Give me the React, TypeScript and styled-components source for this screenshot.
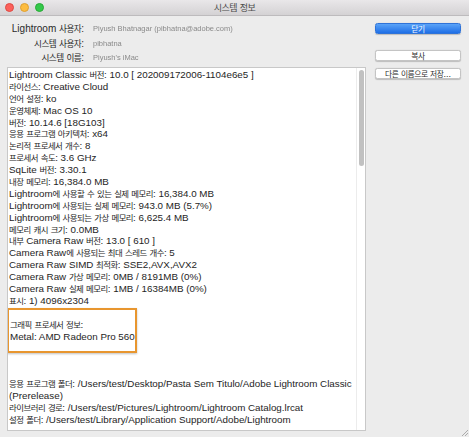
import React, { FC, ReactNode } from "react"
import styled, { createGlobalStyle } from "styled-components"

const GlobalStyle = createGlobalStyle`
	html, body {
		margin: 0;
		padding: 0;
		background: #ececec;
	}
	* {
		box-sizing: border-box;
	}
`

const FONT = `"Liberation Sans", "Noto Sans CJK KR", sans-serif`

const userRows = [
	{ label: "Lightroom 사용자:", value: "Piyush Bhatnagar (pibhatna@adobe.com)" },
	{ label: "시스템 사용자:", value: "pibhatna" },
	{ label: "시스템 이름:", value: "Piyush's iMac" },
]

const infoLines = [
	"Lightroom Classic 버전: 10.0 [ 202009172006-1104e6e5 ]",
	"라이선스: Creative Cloud",
	"언어 설정: ko",
	"운영체제: Mac OS 10",
	"버전: 10.14.6 [18G103]",
	"응용 프로그램 아키텍처: x64",
	"논리적 프로세서 개수: 8",
	"프로세서 속도: 3.6 GHz",
	"SqLite 버전: 3.30.1",
	"내장 메모리: 16,384.0 MB",
	"Lightroom에 사용할 수 있는 실제 메모리: 16,384.0 MB",
	"Lightroom에 사용되는 실제 메모리: 943.0 MB (5.7%)",
	"Lightroom에 사용되는 가상 메모리: 6,625.4 MB",
	"메모리 캐시 크기: 0.0MB",
	"내부 Camera Raw 버전: 13.0 [ 610 ]",
	"Camera Raw에 사용되는 최대 스레드 개수: 5",
	"Camera Raw SIMD 최적화: SSE2,AVX,AVX2",
	"Camera Raw 가상 메모리: 0MB / 8191MB (0%)",
	"Camera Raw 실제 메모리: 1MB / 16384MB (0%)",
	"표시: 1) 4096x2304",
]

const gpuLines = ["그래픽 프로세서 정보:", "Metal: AMD Radeon Pro 560"]

const pathLines = [
	"응용 프로그램 폴더: /Users/test/Desktop/Pasta Sem Titulo/Adobe Lightroom Classic",
	"(Prerelease)",
	"라이브러리 경로: /Users/test/Pictures/Lightroom/Lightroom Catalog.lrcat",
	"설정 폴더: /Users/test/Library/Application Support/Adobe/Lightroom",
]

// The CJK font runs wider than the mac system font, so Hangul runs
// get a slightly smaller, tighter size to keep the line widths close.
const ko = (text: string): ReactNode =>
	text.split(/([\uac00-\ud7a3]+)/).map((part, i) =>
		/[\uac00-\ud7a3]/.test(part) ? <Hangul key={i}>{part}</Hangul> : part
	)

const App: FC = () => {
	return (
		<Window>
			<GlobalStyle />
			<TitleBar>
				<Lights>
					<Light color="#fc605b" border="#de4a43" />
					<Light color="#fdbc40" border="#dea032" />
					<Light color="#34c84a" border="#27aa35" />
				</Lights>
				<Title>{ko("시스템 정보")}</Title>
			</TitleBar>
			<Body>
				<Main>
					<UserGrid>
						{userRows.map((row) => (
							<React.Fragment key={row.label}>
								<UserLabel>{ko(row.label)}</UserLabel>
								<UserValue>{row.value}</UserValue>
							</React.Fragment>
						))}
					</UserGrid>
					<TextBox>
						<TextContent>
							{infoLines.map((line) => (
								<Line key={line}>{ko(line)}</Line>
							))}
							<Blank />
							<Highlight>
								{gpuLines.map((line) => (
									<Line key={line}>{ko(line)}</Line>
								))}
							</Highlight>
							<Blank />
							<Blank />
							<Blank />
							{pathLines.map((line) => (
								<Line key={line}>{ko(line)}</Line>
							))}
						</TextContent>
						<ScrollTrack>
							<ScrollThumb />
						</ScrollTrack>
					</TextBox>
				</Main>
				<Side>
					<Button primary>{ko("닫기")}</Button>
					<Gap />
					<Button>{ko("복사")}</Button>
					<Button>{ko("다른 이름으로 저장...")}</Button>
				</Side>
			</Body>
			<Grip>
				<svg width="6" height="6" viewBox="0 0 6 6">
					<path d="M6 0 L0 6 M6 3 L3 6" stroke="#9a9a9a" strokeWidth="0.8" />
				</svg>
			</Grip>
		</Window>
	)
}

export default App

const Window = styled.div`
	width: 469px;
	height: 437px;
	background: #ececec;
	font-family: ${FONT};
	overflow: hidden;
	position: relative;
`

const Hangul = styled.span`
	font-size: 0.86em;
	letter-spacing: -0.06em;
	line-height: 1;
`

const TitleBar = styled.div`
	height: 16px;
	position: relative;
	display: flex;
	align-items: center;
	justify-content: center;
	background: linear-gradient(#e9e7e9, #d4d2d4);
	border-bottom: 1px solid #bdbbbd;
`

const Lights = styled.div`
	position: absolute;
	left: 5px;
	top: 3px;
	display: flex;
	gap: 6px;
`

const Light = styled.span<{ color: string; border: string }>`
	width: 9px;
	height: 9px;
	border-radius: 50%;
	background: ${(p) => p.color};
	border: 0.5px solid ${(p) => p.border};
`

const Title = styled.div`
	font-size: 10.5px;
	color: #4a4a4a;
`

const Body = styled.div`
	display: flex;
	padding: 7px 8px 0 7px;
	gap: 9px;
`

const Main = styled.div`
	width: 359px;
	display: flex;
	flex-direction: column;
`

const UserGrid = styled.div`
	display: grid;
	grid-template-columns: 77px 1fr;
	grid-auto-rows: 12.5px;
	column-gap: 9px;
	row-gap: 2px;
	height: 44px;
	align-content: start;
`

const UserLabel = styled.div`
	text-align: right;
	font-size: 10px;
	line-height: 12.5px;
	color: #2a2a2a;
	white-space: nowrap;
	overflow: visible;
`

const UserValue = styled.div`
	font-size: 7.5px;
	line-height: 12.5px;
	color: #8a8a8a;
	filter: blur(0.6px);
	white-space: nowrap;
`

const TextBox = styled.div`
	height: 364px;
	background: #fff;
	border: 1px solid #c8c8c8;
	display: flex;
	overflow: hidden;
`

const TextContent = styled.div`
	flex: 1;
	padding: 1px 0 0 1px;
	font-size: 9.8px;
	color: #1e1e1e;
`

const Line = styled.div`
	height: 11.9px;
	line-height: 11.9px;
	white-space: nowrap;
`

const Blank = styled.div`
	height: 11.9px;
`

const Highlight = styled.div`
	margin: -11px 0 -11px -2px;
	padding: 9px 0 9px 1px;
	width: 130px;
	border: 2px solid #e8962f;
	box-shadow: 0 1px 2px rgba(0, 0, 0, 0.25);
	position: relative;
`

const ScrollTrack = styled.div`
	width: 9px;
	border-left: 1px solid #ececec;
	padding: 2px 1px 0 2px;
`

const ScrollThumb = styled.div`
	width: 5px;
	height: 96px;
	border-radius: 3px;
	background: #c1c1c1;
`

const Side = styled.div`
	width: 86px;
	display: flex;
	flex-direction: column;
	gap: 7px;
	padding-top: 0;
`

const Gap = styled.div`
	height: 2px;
`

const Button = styled.button<{ primary?: boolean }>`
	height: 11px;
	padding: 0;
	font-family: ${FONT};
	font-size: 9px;
	line-height: 10px;
	border-radius: 2.5px;
	color: ${(p) => (p.primary ? "#f4f8ff" : "#2a2a2a")};
	background: ${(p) =>
		p.primary ? "linear-gradient(#5aa3f8, #1f6fe6)" : "#ffffff"};
	border: 0.5px solid ${(p) => (p.primary ? "#2f73d8" : "#c4c4c4")};
	box-shadow: 0 0.5px 1px rgba(0, 0, 0, 0.2);
`

const Grip = styled.div`
	position: absolute;
	right: 1px;
	bottom: 1px;
	display: flex;
`
